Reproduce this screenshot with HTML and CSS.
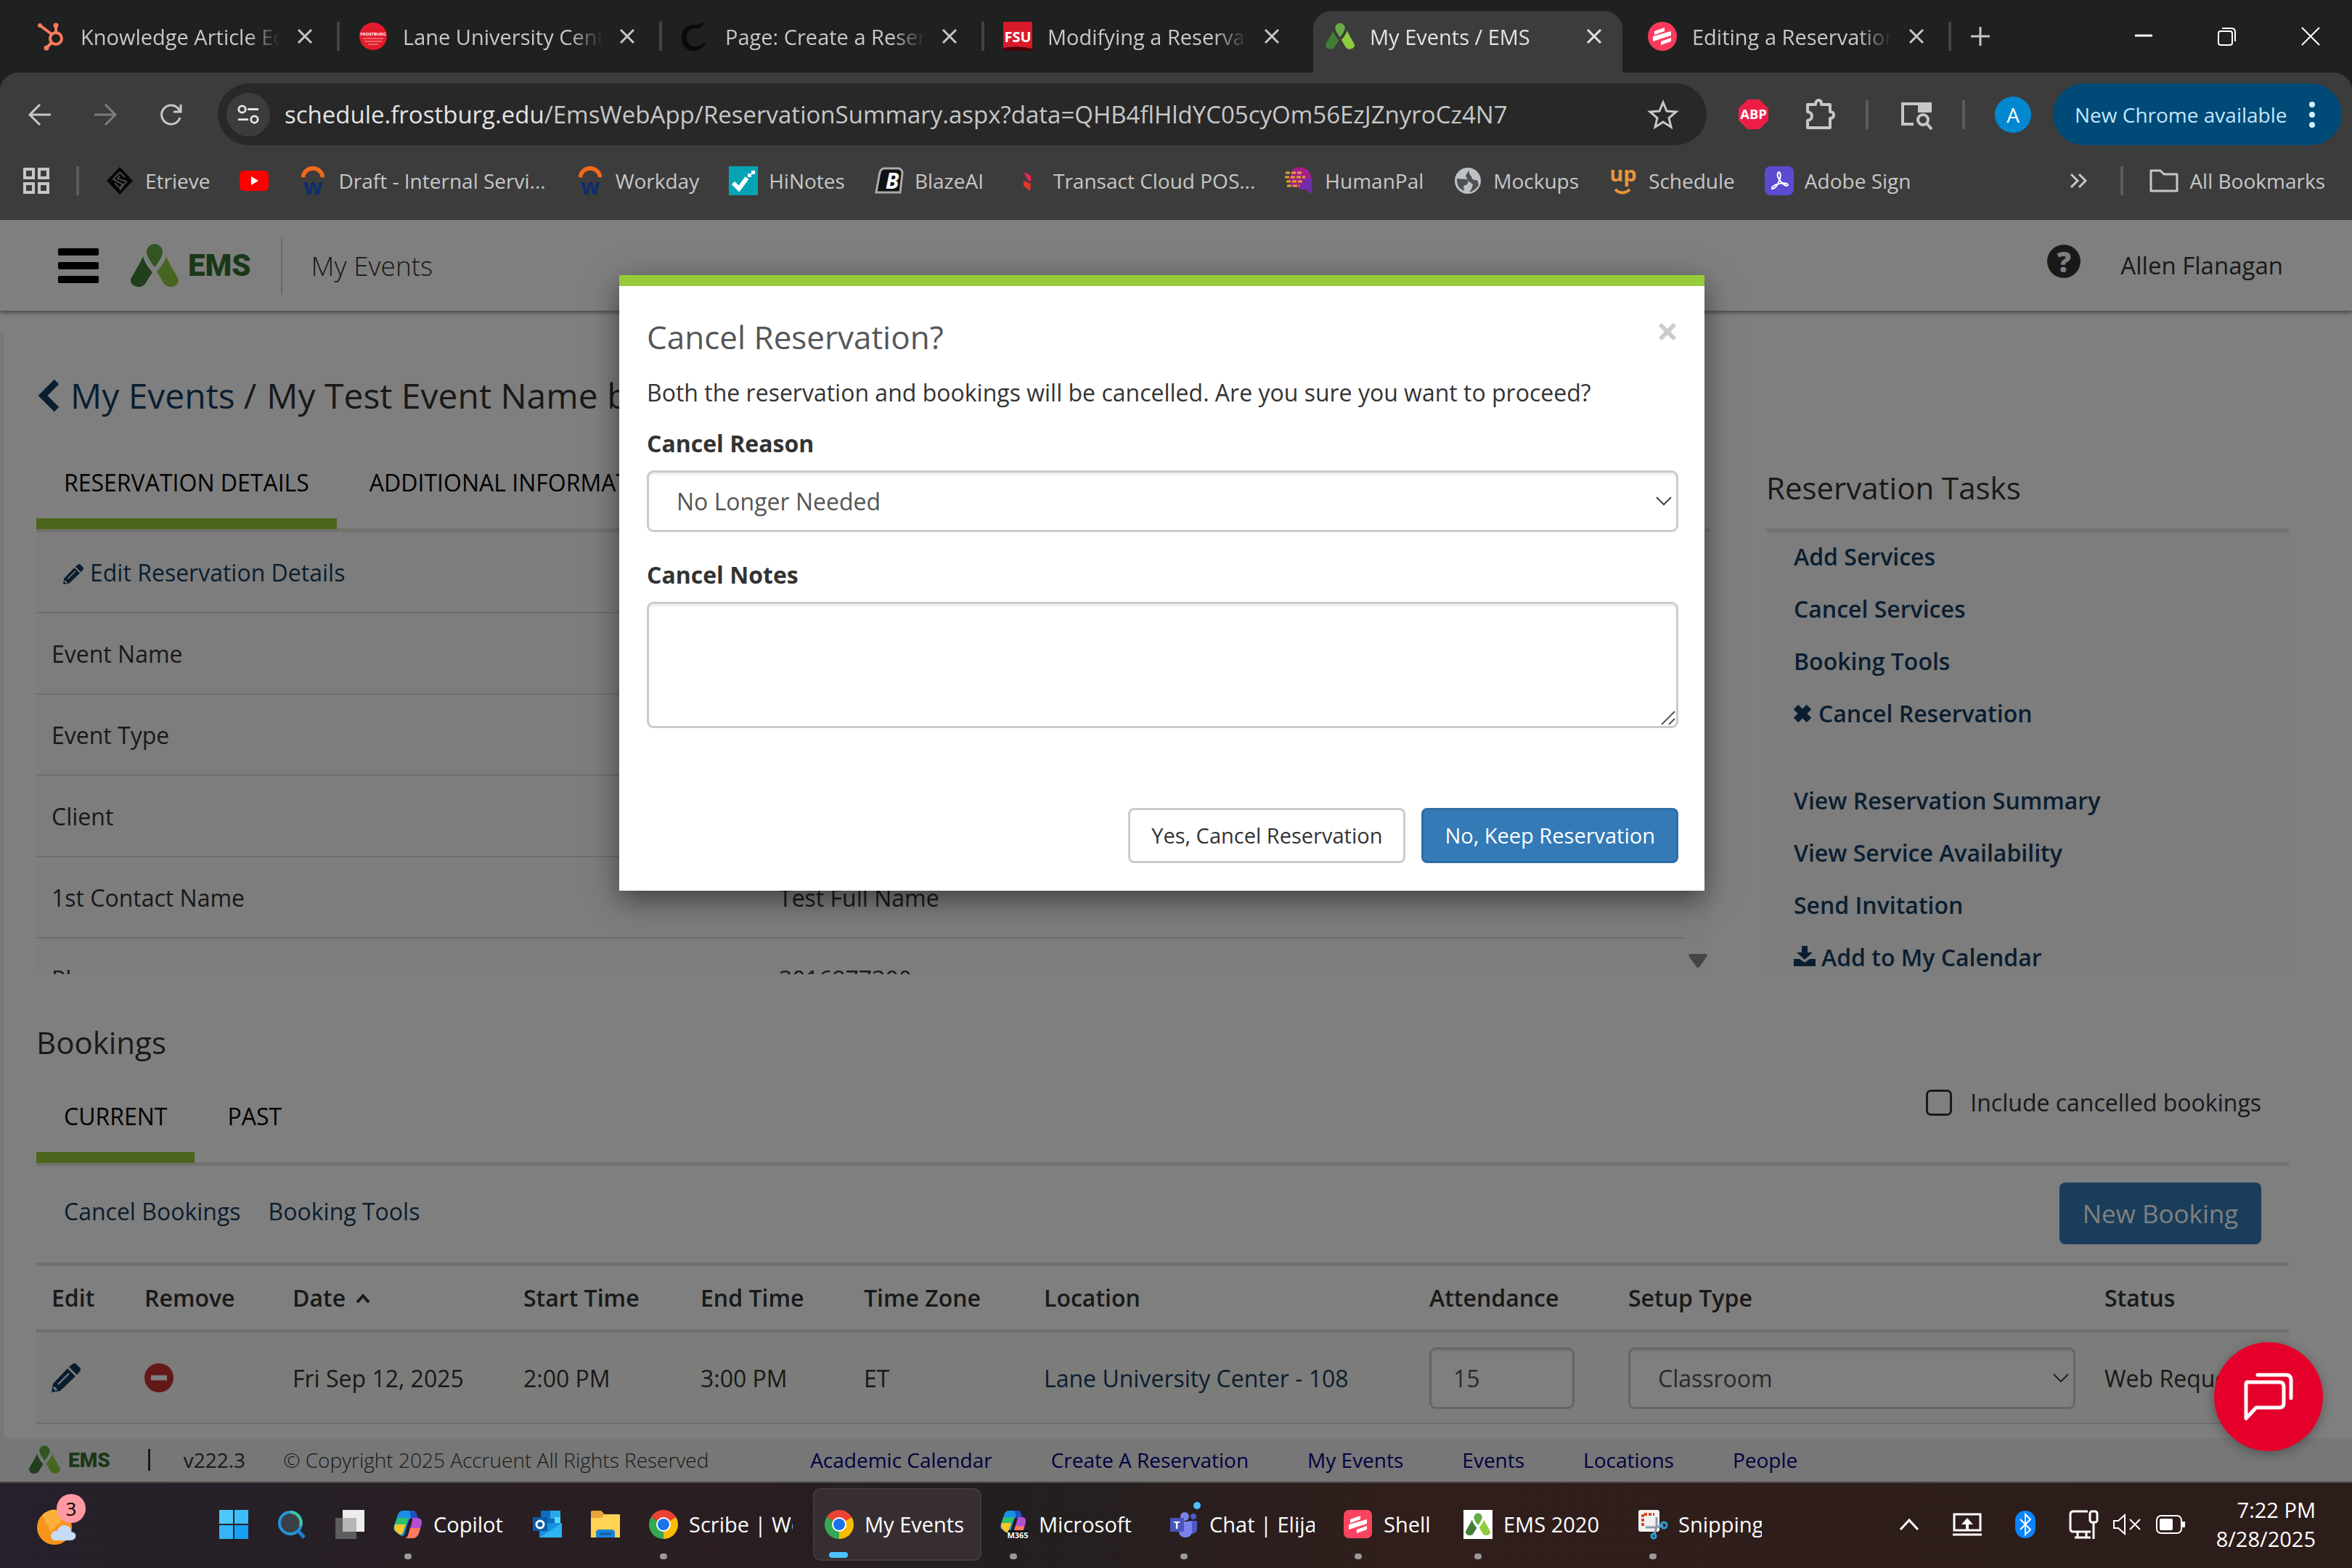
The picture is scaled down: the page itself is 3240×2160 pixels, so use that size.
FILE: index.html
```html
<!DOCTYPE html>
<html lang="en">
<head>
    <meta charset="UTF-8">
    <title>My Events / EMS</title>
    <link rel="stylesheet" href="styles.css">
</head>
<body>

<svg class="sprites" aria-hidden="true">
    <symbol id="ems" viewBox="0 0 66 60">
        <path fill="#67ab42" d="M33 0C27 0 22 5 22 11C22 18 29 27 33 32C37 27 44 18 44 11C44 5 39 0 33 0Z"/>
        <path fill="#407e38" d="M17 17C19 25 25 34 30 39L20 55C15 62 0 60 0 50C0 46 12 30 17 17Z"/>
        <path fill="#8fcb3e" d="M49 17C47 25 40 34 36 38L46 55C51 62 66 60 66 50C66 46 54 30 49 17Z"/>
    </symbol>
    <symbol id="chrome" viewBox="0 0 40 40">
        <path fill="#ea4335" d="M20 20L2.700 10A20 20 0 0 1 37.300 10Z"/>
        <path fill="#fbbc05" d="M20 20L37.300 10A20 20 0 0 1 20 40Z"/>
        <path fill="#34a853" d="M20 20L20 40A20 20 0 0 1 2.700 10Z"/>
        <path fill="#ea4335" d="M20 10H37.300L30 14Z"/>
        <path fill="#fbbc05" d="M29 23L20 40L24 28Z"/>
        <circle cx="20" cy="20" r="10" fill="#fff"/>
        <circle cx="20" cy="20" r="8" fill="#1a73e8"/>
    </symbol>
    <symbol id="x" viewBox="0 0 20 20"><path d="M1 1L19 19M19 1L1 19" stroke="currentColor" stroke-width="3" fill="none"/></symbol>
    <symbol id="bars" viewBox="0 0 40 40"><path fill="#fff" d="M9 13L23 8V13L9 18ZM7 20L32 13V19L7 27ZM18 27L32 22V27L18 32Z"/></symbol>
    <symbol id="down" viewBox="0 0 22 14"><path d="M1 2L11 12L21 2" fill="none" stroke="currentColor" stroke-width="2"/></symbol>
    <symbol id="pencil" viewBox="0 0 40 40"><path fill="currentColor" d="M0 40L2 28L22 7L33 18L12 38ZM24 5L29 1Q31-1 34 1L39 6Q41 9 39 11L35 16Z"/><path d="M9 29L24 14" stroke="#fafafa" stroke-width="2"/><path d="M3 33L7 37" stroke="#fafafa" stroke-width="3"/></symbol>
    <symbol id="copilot" viewBox="0 0 40 40">
        <path fill="#1b8fe8" d="M13 1H26Q31 1 32 7L33 11H26Q22 11 20 17L15 34Q13 38 8 34L3 30Q-1 28 1 21L6 7Q8 1 13 1Z"/>
        <path fill="#2fc06c" d="M5 11H21L13 31Q12 36 7 33L3 29Q0 27 2 20Z"/>
        <path fill="#f5c52b" d="M2 20L17 20L13 31Q11 36 7 33L3 29Q0 27 2 20Z"/>
        <path fill="#b14fd0" d="M26 11H34Q40 12 39 19L35 32Q33 38 27 39H16Q20 38 21 32L26 15Z"/>
        <path fill="#ff7a5c" d="M23 25H37L35 32Q33 38 27 39H16Q20 38 21 32Z"/>
        <path fill="#1e50c8" d="M22 1H26Q31 1 32 7L33 11H24Z"/>
    </symbol>
    <symbol id="workday" viewBox="0 0 40 42">
        <path d="M6 16A14 13 0 0 1 34 16" fill="none" stroke="#f26a1b" stroke-width="6"/>
        <text x="20" y="41" text-anchor="middle" font-size="32" font-weight="700" fill="#0b2e6b">w</text>
    </symbol>
</svg>

<header class="tabstrip">
    <div class="tab">
        <svg class="fav" viewBox="0 0 40 40" fill="none" stroke="#ff7a59" stroke-width="4"><circle cx="27" cy="23" r="8"/><path d="M5 5L21 17M27 4V15M21 29L14 36"/><circle cx="5" cy="5" r="3" fill="#ff7a59" stroke="none"/><circle cx="27" cy="5" r="3.500" fill="#ff7a59" stroke="none"/><circle cx="14" cy="36" r="3.500" fill="#ff7a59" stroke="none"/></svg>
        <span class="tab-name">Knowledge Article Editor</span>
        <button class="tab-close" aria-label="Close tab"><svg><use href="#x"/></svg></button>
    </div>
    <div class="tab">
        <svg class="fav" viewBox="0 0 40 40"><circle cx="20" cy="20" r="19" fill="#e21c2c"/><text x="20" y="19" text-anchor="middle" font-size="6" font-weight="700" fill="#fff">FROSTBURG</text><path d="M6 23H34M8 27H32M13 31H27" stroke="#f6a5ab" stroke-width="1"/></svg>
        <span class="tab-name">Lane University Center</span>
        <button class="tab-close" aria-label="Close tab"><svg><use href="#x"/></svg></button>
    </div>
    <div class="tab">
        <svg class="fav" viewBox="0 0 40 40"><path d="M30 4Q26 9 19 8Q7 9 7 22Q8 35 20 35Q28 35 33 29Q29 39 18 39Q2 38 2 22Q3 6 17 5Q24 6 30 2Z" fill="#0a0a0a" stroke="#0a0a0a" stroke-width="2"/></svg>
        <span class="tab-name">Page: Create a Reservation</span>
        <button class="tab-close" aria-label="Close tab"><svg><use href="#x"/></svg></button>
    </div>
    <div class="tab no-sep">
        <svg class="fav" viewBox="0 0 40 40"><path fill="#d8192a" d="M0 0H40V40H0Z"/><path fill="#4d0208" d="M0 36Q20 32 40 37V40H0Z"/><text x="20" y="28" text-anchor="middle" font-family="Open Sans" font-size="20" font-weight="700" fill="#fff">FSU</text></svg>
        <span class="tab-name">Modifying a Reservation</span>
        <button class="tab-close" aria-label="Close tab"><svg><use href="#x"/></svg></button>
    </div>
    <div class="tab active">
        <svg class="fav"><use href="#ems"/></svg>
        <span class="tab-name">My Events / EMS</span>
        <button class="tab-close" aria-label="Close tab"><svg><use href="#x"/></svg></button>
    </div>
    <div class="tab">
        <svg class="fav" viewBox="0 0 40 40"><circle cx="20" cy="20" r="20" fill="#fa3a5c"/><use href="#bars"/></svg>
        <span class="tab-name">Editing a Reservation</span>
        <button class="tab-close" aria-label="Close tab"><svg><use href="#x"/></svg></button>
    </div>
    <button class="tab-new" aria-label="New tab"><svg viewBox="0 0 26 26"><path d="M13 0V26M0 13H26" stroke="#c7c7c7" stroke-width="3"/></svg></button>
    <div class="win-buttons">
        <button aria-label="Minimize"><svg viewBox="0 0 26 26"><path d="M1 12H25" stroke="#fff" stroke-width="3"/></svg></button>
        <button aria-label="Restore"><svg viewBox="0 0 26 26" fill="none" stroke="#fff" stroke-width="2"><rect x="1" y="6" width="19" height="19" rx="3"/><path d="M6 2H19Q24 2 24 7V20"/></svg></button>
        <button aria-label="Close"><svg viewBox="0 0 26 26"><path d="M1 1L25 25M25 1L1 25" stroke="#fff" stroke-width="2"/></svg></button>
    </div>
</header>

<div class="toolbar">
    <nav class="nav-row">
        <button class="nav-btn" aria-label="Back"><svg viewBox="0 0 32 32" fill="none" stroke="#c7c7c7" stroke-width="3"><path d="M16 2L2 16L16 30M2 16H31"/></svg></button>
        <button class="nav-btn" aria-label="Forward"><svg viewBox="0 0 32 32" fill="none" stroke="#7c7c7c" stroke-width="3"><path d="M16 2L30 16L16 30M30 16H1"/></svg></button>
        <button class="nav-btn" aria-label="Reload"><svg viewBox="0 0 32 32" fill="none" stroke="#c7c7c7" stroke-width="3"><path d="M29 20A13 13 0 1 1 26 7L30 12M30 2V12H20"/></svg></button>
        <div class="omnibox">
            <span class="site-info"><svg viewBox="0 0 32 32" fill="none" stroke="#e3e3e3" stroke-width="3"><circle cx="7" cy="8" r="5"/><path d="M15 8H31M1 23H16"/><circle cx="25" cy="23" r="5"/></svg></span>
            <span class="url"><b>schedule.frostburg.edu</b>/EmsWebApp/ReservationSummary.aspx?data=QHB4flHldYC05cyOm56EzJZnyroCz4N7</span>
            <svg class="star" viewBox="0 0 40 40"><path d="M20 3L25 15L38 16L28 24.500L31 37L20 30L9 37L12 24.500L2 16L15 15Z" fill="none" stroke="#c7c7c7" stroke-width="3"/></svg>
        </div>
        <svg class="ext" viewBox="0 0 40 40"><path fill="#ed1e45" d="M12 0H28L40 12V28L28 40H12L0 28V12Z"/><text x="20" y="26" text-anchor="middle" font-family="Open Sans" font-size="18" font-weight="700" fill="#fff">ABP</text></svg>
        <svg class="ext puzzle" viewBox="0 0 44 44"><path d="M5 8H16V7Q17 2 20 2Q24 2 24 7V8H36V18Q41 18 41 22Q41 27 36 27V40H5V30Q11 29 11 24Q11 19 5 18Z" fill="none" stroke="#c7c7c7" stroke-width="4" stroke-linejoin="round"/></svg>
        <i class="sep"></i>
        <svg class="ext side" viewBox="0 0 44 44"><path d="M18 35H3V7H41V19" fill="none" stroke="#c7c7c7" stroke-width="4"/><path d="M24 7H42V19H24Z" fill="#c7c7c7"/><circle cx="31" cy="29" r="7" fill="none" stroke="#c7c7c7" stroke-width="4"/><path d="M36 34L43 42" stroke="#c7c7c7" stroke-width="4"/></svg>
        <i class="sep"></i>
        <span class="avatar">A</span>
        <button class="update">New Chrome available <svg viewBox="0 0 8 36" fill="#d7efff"><circle cx="4" cy="4" r="4"/><circle cx="4" cy="18" r="4"/><circle cx="4" cy="32" r="4"/></svg></button>
    </nav>
    <nav class="bookmarks">
        <svg class="apps" viewBox="0 0 36 36" fill="none" stroke="#c7c7c7" stroke-width="4"><path d="M2 2H14V14H2ZM22 2H34V14H22ZM2 22H14V34H2ZM22 22H34V34H22Z"/></svg>
        <i class="sep"></i>
        <a class="bm"><svg viewBox="0 0 40 40"><path d="M20 1L38 20L20 39L2 20Z" fill="#050505"/><path d="M20 8L11 18L24 25L20 30L13 23M20 8L27 15M20 13L17 17L29 21L20 33" fill="none" stroke="#4a4a4a" stroke-width="2"/></svg>Etrieve</a>
        <a class="bm"><svg viewBox="0 0 40 40"><rect y="6" width="40" height="28" rx="6" fill="#f00"/><path fill="#fff" d="M16 14L26 20L16 26Z"/></svg></a>
        <a class="bm"><svg><use href="#workday"/></svg>Draft - Internal Servi...</a>
        <a class="bm"><svg><use href="#workday"/></svg>Workday</a>
        <a class="bm"><svg viewBox="0 0 40 40"><path fill="#06a3b4" d="M0 0H40V40H0Z"/><path d="M6 23L14 31L25 16" fill="none" stroke="#fff" stroke-width="6"/><path d="M26 10H31V15H26ZM31 6H36V11H31Z" fill="#fff"/></svg>HiNotes</a>
        <a class="bm"><svg viewBox="0 0 40 40"><path fill="#111" stroke="#aaa" stroke-width="3" d="M12 3H33Q38 4 38 10L35 36H2L6 14Q7 4 12 3Z"/><text x="24" y="31" text-anchor="middle" font-family="Open Sans" font-style="italic" font-size="30" font-weight="700" fill="#fff">B</text></svg>BlazeAI</a>
        <a class="bm"><svg viewBox="0 0 40 40"><path fill="#f0254f" d="M14 8L24 13V21L20 19Z"/><path fill="#e8352b" d="M14 20L24 24L23 34L14 27Z"/></svg>Transact Cloud POS...</a>
        <a class="bm"><svg viewBox="0 0 40 40"><path fill="#a51e8c" d="M12 3Q24-1 32 6Q39 14 37 38L28 32Q22 33 17 29L9 28L5 18Z"/><path fill="#6f2da8" d="M26 18L37 16V38L28 32L20 31Z"/><path d="M1 9H24M0 15H28M2 21H26M3 27H20" stroke="#e0a52a" stroke-width="3" stroke-dasharray="6 2"/></svg>HumanPal</a>
        <a class="bm"><svg viewBox="0 0 40 40"><circle cx="20" cy="20" r="18" fill="#bdc1c6"/><path fill="#3c3c3c" d="M5 17L18 18Q22 20 19 25L14 27L15 34Q4 30 5 17ZM22 5Q21 11 25 14Q25 20 33 19L35 26Q30 34 22 36Q26 31 27 25L20 20L17 13Z" opacity=".85"/></svg>Mockups</a>
        <a class="bm"><svg viewBox="0 0 40 40"><text x="20" y="21" text-anchor="middle" font-family="Open Sans" font-size="29" font-weight="700" fill="#e8963a">up</text><path d="M9 32Q19 41 29 32" fill="none" stroke="#e8963a" stroke-width="4"/></svg>Schedule</a>
        <a class="bm"><svg viewBox="0 0 40 40"><rect width="40" height="40" rx="8" fill="#5a4bd0"/><path d="M19 8Q24 10 20 20Q15 32 10 31Q9 27 20 24Q31 22 32 26Q29 29 22 21Q15 12 19 8Z" fill="none" stroke="#fff" stroke-width="2"/></svg>Adobe Sign</a>
        <button class="more" aria-label="More bookmarks"><svg viewBox="0 0 24 20" fill="none" stroke="#c7c7c7" stroke-width="3"><path d="M2 1L11 10L2 19M13 1L22 10L13 19"/></svg></button>
        <i class="sep"></i>
        <a class="bm"><svg viewBox="0 0 40 40"><path d="M2 6H15L20 11H38V34H2Z" fill="none" stroke="#c7c7c7" stroke-width="3" stroke-linejoin="round"/></svg>All Bookmarks</a>
    </nav>
</div>

<main class="page">
    <header class="ems-header">
        <button class="burger" aria-label="Menu"><i></i><i></i><i></i></button>
        <svg class="logo"><use href="#ems"/></svg>
        <span class="brand">EMS</span>
        <span class="page-name">My Events</span>
        <span class="help">?</span>
        <a class="user">Allen Flanagan</a>
    </header>

    <div class="content">
        <h1 class="crumbs"><svg viewBox="0 0 28 44"><path d="M25 3L6 22L25 41" fill="none" stroke="currentColor" stroke-width="9"/></svg><a href="#">My Events</a><span>/</span>My Test Event Name by Me</h1>

        <div class="columns">
            <section class="details">
                <ul class="tabs">
                    <li class="active">RESERVATION DETAILS</li>
                    <li>ADDITIONAL INFORMATION</li>
                </ul>
                <div class="scroller">
                    <div class="row edit"><a href="#"><svg><use href="#pencil"/></svg>Edit Reservation Details</a></div>
                    <div class="row"><span>Event Name</span><span></span></div>
                    <div class="row"><span>Event Type</span><span></span></div>
                    <div class="row"><span>Client</span><span></span></div>
                    <div class="row"><span>1st Contact Name</span><span>Test Full Name</span></div>
                    <div class="row"><span>Phone</span><span>3016877300</span></div>
                    <svg class="scroll-arrow" viewBox="0 0 26 20"><path fill="#8a8a8a" d="M2 0H24Q27 1 25 4L15 18Q13 20 11 18L1 4Q-1 1 2 0Z"/></svg>
                </div>
            </section>
            <aside class="tasks">
                <h2>Reservation Tasks</h2>
                <ul>
                    <li><a href="#">Add Services</a></li>
                    <li><a href="#">Cancel Services</a></li>
                    <li><a href="#">Booking Tools</a></li>
                    <li class="last"><a href="#"><svg class="i-x" viewBox="0 0 24 24"><path d="M3 3L21 21M21 3L3 21" stroke="currentColor" stroke-width="9"/></svg>Cancel Reservation</a></li>
                    <li><a href="#">View Reservation Summary</a></li>
                    <li><a href="#">View Service Availability</a></li>
                    <li><a href="#">Send Invitation</a></li>
                    <li><a href="#"><svg class="i-dl" viewBox="0 0 30 28"><path fill="currentColor" d="M11 0H19V9H26L15 19L4 9H11ZM0 18H8L15 23L22 18H30V28H0Z"/></svg>Add to My Calendar</a></li>
                </ul>
            </aside>
        </div>

        <section class="bookings">
            <h2>Bookings</h2>
            <ul class="tabs">
                <li class="active">CURRENT</li>
                <li>PAST</li>
                <li class="include"><input type="checkbox" id="include"><label for="include">Include cancelled bookings</label></li>
            </ul>
            <div class="actions">
                <a href="#">Cancel Bookings</a>
                <a href="#">Booking Tools</a>
                <button class="btn-new">New Booking</button>
            </div>
            <table>
                <colgroup><col class="c1"><col class="c2"><col class="c3"><col class="c4"><col class="c5"><col class="c6"><col class="c7"><col class="c8"><col class="c9"><col></colgroup>
                <thead>
                    <tr><th>Edit</th><th>Remove</th><th>Date <svg class="sort" viewBox="0 0 20 14"><path d="M2 12L10 3L18 12" fill="none" stroke="currentColor" stroke-width="4"/></svg></th><th>Start Time</th><th>End Time</th><th>Time Zone</th><th>Location</th><th>Attendance</th><th>Setup Type</th><th>Status</th></tr>
                </thead>
                <tbody>
                    <tr>
                        <td><svg class="i-row link"><use href="#pencil"/></svg></td>
                        <td><svg class="i-row" viewBox="0 0 40 40"><circle cx="20" cy="20" r="20" fill="#c93030"/><path d="M9 20H31" stroke="#fff" stroke-width="7"/></svg></td>
                        <td>Fri Sep 12, 2025</td>
                        <td>2:00 PM</td>
                        <td>3:00 PM</td>
                        <td>ET</td>
                        <td><a href="#">Lane University Center - 108</a></td>
                        <td><input class="field count" type="text" value="15" aria-label="Attendance"></td>
                        <td><div class="select-wrap setup"><select class="field" aria-label="Setup Type"><option>Classroom</option></select><svg><use href="#down"/></svg></div></td>
                        <td class="status">Web Request</td>
                    </tr>
                </tbody>
            </table>
        </section>
    </div>

    <footer class="ems-footer">
        <svg class="logo"><use href="#ems"/></svg>
        <span class="brand">EMS</span>
        <i class="bar"></i>
        <span class="version">v222.3</span>
        <span class="copy">© Copyright 2025 Accruent All Rights Reserved</span>
        <nav>
            <a href="#">Academic Calendar</a>
            <a href="#">Create A Reservation</a>
            <a href="#">My Events</a>
            <a href="#">Events</a>
            <a href="#">Locations</a>
            <a href="#">People</a>
        </nav>
    </footer>

    <div class="backdrop">
        <form class="modal" role="dialog" aria-labelledby="modalTitle">
            <div class="modal-head">
                <h2 id="modalTitle">Cancel Reservation?</h2>
                <button type="button" class="modal-close" aria-label="Close"><svg viewBox="0 0 24 24"><path d="M2 2L22 22M22 2L2 22" stroke="#ccc" stroke-width="6"/></svg></button>
            </div>
            <p>Both the reservation and bookings will be cancelled. Are you sure you want to proceed?</p>
            <label for="reason">Cancel Reason</label>
            <div class="select-wrap"><select class="field" id="reason"><option>No Longer Needed</option></select><svg><use href="#down"/></svg></div>
            <label for="notes" class="notes-label">Cancel Notes</label>
            <div class="notes"><textarea class="field" id="notes"></textarea><svg viewBox="0 0 22 22"><path d="M2 20L20 2M12 20L20 12" stroke="#555" stroke-width="2"/></svg></div>
            <div class="modal-foot">
                <button type="button" class="btn">Yes, Cancel Reservation</button>
                <button type="button" class="btn primary">No, Keep Reservation</button>
            </div>
        </form>
    </div>

    <button class="chat" aria-label="Chat"><svg viewBox="0 0 68 68" fill="none" stroke="#fff" stroke-width="5" stroke-linejoin="round" stroke-linecap="round"><path d="M4 14H49Q55 14 55 20V43Q55 49 49 49H17L3 64V16Q3 14 9 14Z"/><path d="M19 4H58Q65 4 65 11V36"/></svg></button>
</main>

<footer class="taskbar">
    <span class="weather"><svg viewBox="0 0 60 60"><circle cx="25" cy="34" r="24" fill="#f7941e"/><path fill="#fbb03b" d="M8 17Q25 2 42 17L20 40Z"/><path fill="#c5dcf8" d="M26 52Q18 50 21 42Q25 38 29 39Q33 28 43 32Q48 34 48 40Q56 41 54 48Q52 52 46 52Z"/></svg><b>3</b></span>
    <button class="task icon" aria-label="Start"><svg viewBox="0 0 40 40"><path fill="#4cc9fa" d="M0 0H19V19H0Z"/><path fill="#3dbcf8" d="M21 0H40V19H21Z"/><path fill="#35b4f6" d="M0 21H19V40H0Z"/><path fill="#16a0f2" d="M21 21H40V40H21Z"/></svg></button>
    <button class="task icon" aria-label="Search"><svg viewBox="0 0 40 40"><circle cx="18" cy="18" r="15" fill="#3a4047" stroke="#2595d3" stroke-width="4"/><path d="M18 3A15 15 0 0 1 32 22" stroke="#3fc59c" stroke-width="4" fill="none"/><path d="M29 29L37 38" stroke="#1b7fd0" stroke-width="5"/></svg></button>
    <button class="task icon" aria-label="Task view"><svg viewBox="0 0 40 40"><path fill="#ececec" d="M10 0H40V30H10Z"/><path fill="#5d5d5d" d="M0 11H29V40H0Z"/><path fill="#b5b5b5" d="M10 11H29V30H10Z"/></svg></button>
    <button class="task w-copilot open"><svg><use href="#copilot"/></svg><span>Copilot</span></button>
    <button class="task icon" aria-label="Outlook"><svg viewBox="0 0 40 40"><path fill="#0f6cbd" d="M11 1H38V20H11Z"/><path fill="#28a8ea" d="M24 1H38V12H24Z"/><path fill="#50d9ff" d="M30 10H38V18H30Z"/><path fill="#1490df" d="M9 18L40 18V38H9Z"/><path fill="#2bb4f0" d="M40 18L9 38H40Z"/><path fill="#0a5ba8" d="M0 10H20V29H0Z"/><circle cx="10" cy="20" r="5" fill="none" stroke="#fff" stroke-width="3"/></svg></button>
    <button class="task icon" aria-label="File Explorer"><svg viewBox="0 0 40 40"><path fill="#e8a33d" d="M0 3Q0 1 3 1H14L19 6H40V14H0Z"/><path fill="#ffd454" d="M0 11H14L19 6H38Q40 6 40 9V38H0Z"/><path fill="#1c84d6" d="M7 38V30Q8 27 11 27H29Q32 27 33 30V38Z"/><path d="M12 33H28" stroke="#0d5ea6" stroke-width="3"/></svg></button>
    <button class="task w-scribe open"><svg><use href="#chrome"/></svg><span>Scribe | Wo</span></button>
    <button class="task w-events open current"><svg><use href="#chrome"/></svg><span>My Events</span></button>
    <button class="task w-microsoft open"><svg viewBox="0 0 40 40"><use href="#copilot" height="36"/><path fill="#111" d="M13 28H40V40H13Z"/><text x="26" y="39" text-anchor="middle" font-size="11" font-weight="700" fill="#fff">M365</text></svg><span>Microsoft</span></button>
    <button class="task w-chat open"><svg viewBox="0 0 40 40"><circle cx="21" cy="9" r="6" fill="#7b83eb"/><circle cx="33" cy="9" r="4" fill="#5059c9"/><path fill="#5059c9" d="M26 15H38V27Q37 33 29 33Z"/><path fill="#7b83eb" d="M13 16H31V30Q30 38 22 38Q14 38 13 30Z"/><path fill="#4b53bc" d="M1 11H20V30H1Z"/><text x="10" y="26" text-anchor="middle" font-size="15" font-weight="700" fill="#fff">T</text></svg><span>Chat | Elija</span><i class="badge"></i></button>
    <button class="task w-shell open"><svg viewBox="0 0 40 40"><rect width="39" height="39" rx="7" fill="#fa4460"/><use href="#bars"/></svg><span>Shell</span></button>
    <button class="task w-ems open"><svg viewBox="0 0 40 40"><path fill="#fff" d="M0 0H40V40H0Z"/><use href="#ems" x="3" y="4" width="34" height="32"/></svg><span>EMS 2020</span></button>
    <button class="task w-snip open"><svg viewBox="0 0 40 40"><rect width="29" height="30" rx="3" fill="#f1f1f1"/><path d="M6 22V6H22" fill="none" stroke="#d24726" stroke-width="4" stroke-dasharray="4 2"/><path d="M25 10V24L34 21M25 24H10M25 24L22 33" stroke="#8d98a5" stroke-width="3" fill="none"/><circle cx="35" cy="21" r="4" fill="none" stroke="#2a9fd8" stroke-width="3"/><circle cx="21" cy="36" r="3" fill="none" stroke="#2a9fd8" stroke-width="3"/></svg><span>Snipping</span></button>
    <div class="tray">
        <svg viewBox="0 0 28 18" class="t-up"><path d="M2 16L14 3L26 16" fill="none" stroke="#fff" stroke-width="3"/></svg>
        <svg viewBox="0 0 40 32" class="t-out"><path d="M2 2H38V24H2ZM0 30H40" fill="none" stroke="#fff" stroke-width="3"/><path fill="#fff" d="M20 7L28 16H22V24H18V16H12Z"/></svg>
        <svg viewBox="0 0 28 38" class="t-bt"><rect width="28" height="38" rx="14" fill="#0a84ff"/><path d="M7 12L21 26L14 33V5L21 12L7 26" fill="none" stroke="#fff" stroke-width="2"/></svg>
        <svg viewBox="0 0 40 40" class="t-net"><path d="M26 2H6Q2 2 2 6V26Q2 30 6 30H30M12 30V38M24 30V38M8 38H30M34 17V40" fill="none" stroke="#fff" stroke-width="3"/><rect x="29" y="2" width="10" height="15" rx="3" fill="none" stroke="#fff" stroke-width="3"/></svg>
        <svg viewBox="0 0 40 30" class="t-vol"><path d="M2 10H8L17 2V28L8 20H2ZM24 8L38 22M38 8L24 22" fill="none" stroke="#fff" stroke-width="2"/></svg>
        <svg viewBox="0 0 40 26" class="t-bat"><rect x="1" y="1" width="34" height="24" rx="6" fill="none" stroke="#fff" stroke-width="2"/><rect x="5" y="5" width="18" height="16" rx="2" fill="#fff"/><path d="M38 9V17" stroke="#fff" stroke-width="4"/></svg>
        <div class="clock">7:22 PM<br>8/28/2025</div>
    </div>
</footer>

</body>
</html>
```
FILE: styles.css
```css
* {
    box-sizing: border-box;
}
body {
    margin: 0;
    height: 100vh;
    display: flex;
    flex-direction: column;
    overflow: hidden;
    font-family: "Open Sans", "Noto Sans", sans-serif;
    font-size: 32px;
    color: #333;
    background: #1f2020;
}
button, input, select, textarea {
    font: inherit;
    color: inherit;
    margin: 0;
}
button {
    background: none;
    border: 0;
    padding: 0;
}
h1, h2, p, ul {
    margin: 0;
    padding: 0;
    font-weight: 400;
    list-style: none;
}
a {
    color: #143d61;
    text-decoration: none;
}
svg {
    flex: none;
    overflow: visible;
}
.sprites {
    position: absolute;
    width: 0;
    height: 0;
}

/* browser tabs */
.tabstrip {
    flex: none;
    display: flex;
    align-items: flex-end;
    height: 100px;
    padding-left: 24px;
    background: #1f2020;
    color: #c7c7c7;
    font-size: 29px;
}
.tab {
    display: flex;
    align-items: center;
    position: relative;
    width: 444px;
    height: 85px;
    padding: 0 38px 15px 26px;
}
.tab::after {
    content: "";
    position: absolute;
    right: 0;
    top: 15px;
    width: 4px;
    height: 40px;
    background: #444;
}
.tab.active {
    background: #3c3c3c;
    border-radius: 25px 25px 0 0;
    width: 426px;
    margin: 0 9px;
    padding: 0 29px 15px 17px;
    color: #e3e3e3;
}
.tab.active::after, .tab.no-sep::after {
    display: none;
}
.fav {
    width: 40px;
    height: 40px;
    margin-right: 21px;
}
.tab-name {
    flex: 1;
    overflow: hidden;
    white-space: nowrap;
    -webkit-mask-image: linear-gradient(90deg, #000 230px, transparent 275px);
    margin-right: 15px;
}
.tab-close svg {
    display: block;
    width: 20px;
    height: 20px;
}
.tab-new {
    margin-left: 27px;
    height: 100px;
}
.tab-new svg, .win-buttons svg {
    display: block;
    width: 26px;
    height: 26px;
    margin: auto;
}
.win-buttons {
    display: flex;
    height: 100px;
    margin-left: auto;
}
.win-buttons button {
    width: 115px;
}

/* toolbar */
.toolbar {
    flex: none;
    background: #3c3c3c;
    border-radius: 25px 25px 0 0;
    height: 203px;
    color: #c7c7c7;
}
.nav-row {
    display: flex;
    align-items: center;
    padding: 15px 14px 0 10px;
    height: 100px;
}
.nav-btn {
    width: 90px;
}
.nav-btn svg {
    display: block;
    width: 32px;
    height: 32px;
    margin: auto;
}
.omnibox {
    flex: 1;
    display: flex;
    align-items: center;
    height: 85px;
    margin-left: 20px;
    padding: 0 40px 0 12px;
    border-radius: 43px;
    background: #282828;
    font-size: 33px;
}
.site-info {
    display: flex;
    align-items: center;
    justify-content: center;
    width: 60px;
    height: 60px;
    border-radius: 50%;
    background: #3c3c3c;
    margin-right: 20px;
}
.site-info svg {
    width: 30px;
    height: 30px;
}
.url b {
    font-weight: 400;
    color: #e3e3e3;
}
.star {
    width: 40px;
    height: 40px;
    margin-left: auto;
}
.ext {
    width: 41px;
    height: 41px;
    margin-left: 44px;
}
.puzzle, .side {
    width: 44px;
    height: 44px;
}
.puzzle {
    margin-left: 49px;
}
.nav-row .sep {
    margin-left: 41px;
}
.sep {
    width: 4px;
    height: 40px;
    background: #5c5c5c;
}
.avatar {
    width: 50px;
    margin-left: 41px;
    border-radius: 50%;
    background: #0288d1;
    color: #fff;
    font-size: 28px;
    line-height: 50px;
    text-align: center;
}
.update {
    display: flex;
    align-items: center;
    justify-content: space-between;
    width: 398px;
    height: 85px;
    margin-left: 30px;
    padding: 0 37px 0 30px;
    border-radius: 43px;
    background: #004a77;
    color: #c2e7ff;
    font-size: 28px;
}
.update svg {
    width: 8px;
    height: 36px;
}
.bookmarks {
    display: flex;
    align-items: center;
    height: 100px;
    padding: 0 37px 2px 32px;
    font-size: 28px;
}
.apps {
    width: 36px;
    height: 36px;
    margin-right: 37px;
}
.bm {
    display: flex;
    align-items: center;
    gap: 15px;
    margin-left: 41px;
    color: #c7c7c7;
    white-space: nowrap;
}
.sep + .bm {
    margin-left: 36px;
}
.bm svg {
    width: 40px;
    height: 40px;
}
.more {
    margin: 0 46px 0 auto;
}
.more svg {
    display: block;
    width: 24px;
    height: 20px;
}

/* EMS page */
.page {
    flex: 1;
    min-height: 0;
    display: flex;
    flex-direction: column;
    position: relative;
    background: #fff;
}
.ems-header {
    flex: none;
    display: flex;
    align-items: center;
    height: 125px;
    padding: 0 95px 0 80px;
    box-shadow: 0 3px 5px rgba(0, 0, 0, .4);
}
.burger {
    display: flex;
    flex-direction: column;
    gap: 9px;
    width: 56px;
    margin-right: 44px;
}
.burger i {
    height: 10px;
    border-radius: 2px;
    background: #000;
}
.ems-header .logo {
    width: 66px;
    height: 60px;
}
.brand {
    color: #34702f;
    font-family: Roboto, sans-serif;
    font-weight: 900;
}
.ems-header .brand {
    font-size: 42px;
    margin: 0 41px 0 13px;
}
.page-name {
    font-size: 37px;
    font-weight: 300;
    line-height: 80px;
    border-left: 2px solid #d0d0d0;
    padding-left: 40px;
}
.help {
    width: 46px;
    margin: 0 55px 12px auto;
    border-radius: 50%;
    background: #333;
    color: #fff;
    font-size: 38px;
    font-weight: 800;
    line-height: 46px;
    text-align: center;
}
.user {
    color: #333;
    font-size: 33px;
}
.content {
    flex: 1;
    min-height: 0;
    overflow: hidden;
    margin-top: 32px;
    padding: 52px 87px 0 45px;
    border-left: 5px solid #eeeee6;
}
.crumbs {
    display: flex;
    align-items: center;
    font-size: 48px;
    line-height: 66px;
    margin-bottom: 38px;
    white-space: nowrap;
}
.crumbs svg {
    width: 28px;
    height: 44px;
    margin: 0 16px 0 3px;
    color: #143d61;
}
.crumbs span {
    margin: 0 14px 0 12px;
}
.columns {
    display: flex;
    gap: 77px;
}
.details {
    flex: 1;
    min-width: 0;
}
.tabs {
    display: flex;
    border-bottom: 5px solid #e2e2da;
    color: #000;
}
.tabs li {
    padding: 0 38px;
    margin: 0 7px -1px 0;
    line-height: 98px;
    border-bottom: 15px solid transparent;
    white-space: nowrap;
}
.tabs .active {
    border-color: #97cb39;
}
.scroller {
    position: relative;
    height: 609px;
    overflow: hidden;
    padding-right: 36px;
    background: #fafafa;
}
.row {
    display: flex;
    height: 112px;
    padding-left: 21px;
    line-height: 112px;
    border-bottom: 2px solid #ddd;
}
.row span {
    width: 1002px;
}
.row.edit {
    padding-left: 37px;
}
.row svg {
    width: 28px;
    height: 28px;
    margin-right: 9px;
    vertical-align: -4px;
}
.scroll-arrow {
    position: absolute;
    right: 4px;
    bottom: 8px;
    width: 26px;
    height: 20px;
}
.tasks {
    flex: 0 0 720px;
    background: #fafafa;
}
.tasks h2 {
    background: #fff;
    border-bottom: 5px solid #e2e2da;
    font-size: 42px;
    line-height: 112px;
}
.tasks ul {
    padding: 10px 0 0 38px;
}
.tasks li {
    line-height: 48px;
    margin-bottom: 24px;
    font-weight: 600;
}
.tasks li:last-child {
    margin-bottom: 0;
}
.tasks .last {
    margin-bottom: 72px;
}
.i-x {
    width: 24px;
    height: 24px;
    margin-right: 10px;
}
.i-dl {
    width: 30px;
    height: 28px;
    margin-right: 8px;
}

/* bookings */
.bookings h2 {
    font-size: 42px;
    line-height: 60px;
    margin: 63px 0 23px;
}
.tabs .include {
    display: flex;
    align-items: center;
    height: 74px;
    margin: 0 0 0 auto;
    color: #333;
}
.include input {
    appearance: none;
    width: 36px;
    height: 36px;
    margin-right: 25px;
    border: 3px solid #333;
    border-radius: 7px;
    background: #fff;
}
.actions {
    display: flex;
    gap: 38px;
    padding: 23px 38px 25px;
    line-height: 80px;
}
.btn-new {
    width: 278px;
    height: 85px;
    margin-left: auto;
    border-radius: 8px;
    background: #337ab7;
    color: #fff;
    font-size: 35px;
    line-height: 40px;
}
table {
    width: 100%;
    table-layout: fixed;
    border-collapse: separate;
    border-spacing: 0;
}
.c1 { width: 128px; }
.c2 { width: 204px; }
.c3 { width: 318px; }
.c4 { width: 244px; }
.c5 { width: 225px; }
.c6 { width: 248px; }
.c7 { width: 531px; }
.c8 { width: 274px; }
.c9 { width: 656px; }
th {
    height: 97px;
    padding: 0 0 0 21px;
    border: solid #e0e0e0;
    border-width: 5px 0;
    text-align: left;
    font-weight: 600;
    white-space: nowrap;
}
td {
    height: 126px;
    padding: 0 0 0 21px;
    border-bottom: 2px solid #ddd;
    background: #f9f9f6;
    white-space: nowrap;
}
.sort {
    width: 20px;
    height: 14px;
    margin-left: 6px;
    vertical-align: 4px;
}
.i-row {
    display: block;
    width: 40px;
    height: 40px;
}
.link {
    color: #143d61;
}
.field {
    display: block;
    width: 100%;
    height: 85px;
    padding: 0 38px;
    border: 3px solid #ccc;
    border-radius: 9px;
    background: #fff;
    box-shadow: inset 0 3px 3px rgba(0, 0, 0, .075);
    color: #555;
    appearance: none;
    outline: 0;
}
.count {
    width: 200px;
    padding: 0 30px;
}
.setup {
    width: 616px;
}
.select-wrap, .notes {
    position: relative;
}
.select-wrap svg {
    position: absolute;
    right: 9px;
    top: 35px;
    width: 22px;
    height: 14px;
    color: #444;
}

/* page footer */
.ems-footer {
    flex: none;
    display: flex;
    align-items: center;
    height: 60px;
    padding-left: 40px;
    background: #efefef;
    font-size: 28px;
}
.ems-footer .logo {
    width: 43px;
    height: 40px;
}
.ems-footer .brand {
    margin: 0 52px 0 11px;
}
.bar {
    width: 3px;
    height: 30px;
    background: #333;
}
.version {
    margin: 0 52px 0 46px;
}
.copy {
    flex: 0 0 726px;
    font-weight: 300;
}
.ems-footer nav {
    display: flex;
    gap: 81px;
}
.ems-footer nav a {
    color: #000080;
}

/* cancel dialog */
.backdrop {
    position: absolute;
    inset: 0;
    background: rgba(0, 0, 0, .5);
}
.modal {
    width: 1495px;
    margin: 76px auto 0 853px;
    padding: 51px 36px 38px 38px;
    background: #fff;
    border-top: 15px solid #97cb39;
    box-shadow: 0 12px 38px rgba(0, 0, 0, .5);
}
.modal-head {
    display: flex;
    justify-content: space-between;
    align-items: flex-start;
}
.modal h2 {
    color: #55565a;
    font-size: 44px;
    line-height: 38px;
}
.modal-close svg {
    display: block;
    width: 24px;
    height: 24px;
    margin-right: 3px;
}
.modal p {
    line-height: 48px;
    margin: 34px 0 22px;
}
.modal label {
    display: block;
    margin-bottom: 13px;
    line-height: 48px;
    font-weight: 700;
}
.modal .notes-label {
    margin-top: 35px;
}
textarea.field {
    height: 174px;
    resize: none;
}
.notes svg {
    position: absolute;
    right: 3px;
    bottom: 3px;
    width: 22px;
    height: 22px;
}
.modal-foot {
    display: flex;
    justify-content: flex-end;
    gap: 22px;
    margin-top: 110px;
}
.btn {
    height: 76px;
    padding: 0 29px 2px;
    border: 3px solid #ccc;
    border-radius: 8px;
    background: #fff;
    font-size: 29px;
}
.btn.primary {
    background: #337ab7;
    border-color: #2e6da4;
    color: #fff;
}
.chat {
    position: absolute;
    right: 40px;
    bottom: 42px;
    width: 150px;
    height: 150px;
    border-radius: 50%;
    background: #e4002b;
    box-shadow: 0 4px 16px rgba(0, 0, 0, .3);
}
.chat svg {
    display: block;
    width: 68px;
    height: 68px;
    margin: auto;
}

/* windows taskbar */
.taskbar {
    flex: none;
    display: flex;
    align-items: center;
    height: 119px;
    padding: 0 50px 4px;
    border-top: 2px solid #4a4444;
    background: linear-gradient(90deg, #25202a, #2a1e21 30%, #231f20 43%, #301e1b 60%, #2c1d1a);
    color: #fff;
    font-size: 29px;
}
.weather {
    position: relative;
    width: 232px;
}
.weather svg {
    display: block;
    width: 60px;
    height: 60px;
}
.weather b {
    position: absolute;
    left: 28px;
    top: -12px;
    width: 40px;
    border-radius: 50%;
    background: #ff99a4;
    color: #000;
    font-size: 26px;
    font-weight: 400;
    line-height: 40px;
    text-align: center;
}
.task {
    position: relative;
    display: flex;
    align-items: center;
    gap: 15px;
    height: 100px;
    padding: 0 20px;
}
.task > svg {
    width: 40px;
    height: 40px;
}
.task span {
    flex: 1;
    overflow: hidden;
    white-space: nowrap;
    text-align: left;
}
.icon { width: 80px; }
.w-copilot { width: 192px; }
.w-scribe { width: 246px; padding-right: 28px; }
.w-events { width: 232px; margin-right: 4px; }
.w-microsoft { width: 235px; }
.w-chat { width: 240px; }
.w-shell { width: 165px; }
.w-ems { width: 241px; }
.w-snip { width: 210px; }
.w-events {
    padding-left: 14px;
}
.open::after {
    content: "";
    position: absolute;
    left: 35px;
    bottom: 2px;
    width: 10px;
    height: 8px;
    border-radius: 4px;
    background: #999;
}
.current {
    border: 2px solid #423a3b;
    border-radius: 10px;
    background: #372e31;
}
.current::after {
    left: 20px;
    width: 26px;
    background: #4cc2ff;
}
.badge {
    position: absolute;
    left: 53px;
    top: 19px;
    width: 10px;
    height: 10px;
    border-radius: 50%;
    background: #4cc2ff;
}
.tray {
    display: flex;
    align-items: center;
    margin-left: auto;
}
.t-up { width: 28px; margin-right: 46px; }
.t-out { width: 40px; margin-right: 46px; }
.t-bt { width: 28px; margin-right: 46px; }
.t-net { width: 40px; margin-right: 20px; }
.t-vol { width: 40px; margin-right: 20px; }
.t-bat { width: 40px; }
.clock {
    width: 180px;
    line-height: 40px;
    text-align: right;
}
```
